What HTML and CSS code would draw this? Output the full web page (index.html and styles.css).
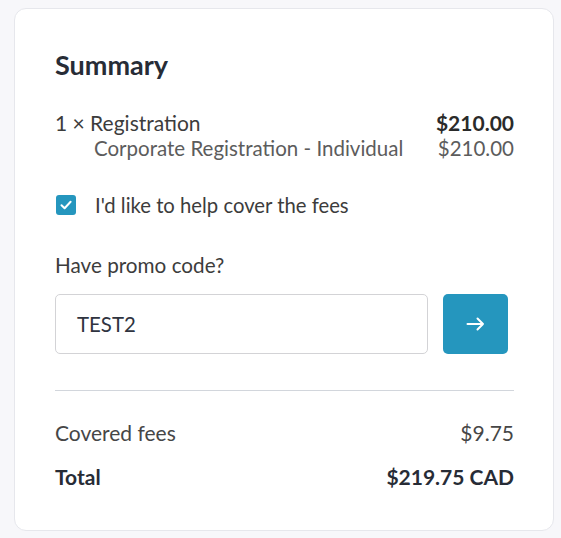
FILE: index.html
```html
<!DOCTYPE html>
<html>
<head>
<meta charset="utf-8">
<link rel="stylesheet" href="styles.css">
</head>
<body>
<div class="card">
  <h2 class="title">Summary</h2>
  <div class="item">
    <div class="row main">
      <span>1 × Registration</span>
      <span class="bold">$210.00</span>
    </div>
    <div class="row sub">
      <span>Corporate Registration - Individual</span>
      <span>$210.00</span>
    </div>
  </div>
  <label class="check">
    <span class="box"><svg width="14" height="14" viewBox="0 0 14 14"><path d="M2.5 7.2 L5.6 10.2 L11.6 3.8" fill="none" stroke="#fff" stroke-width="2" stroke-linecap="round" stroke-linejoin="round"/></svg></span>
    <span>I'd like to help cover the fees</span>
  </label>
  <div class="promo-label">Have promo code?</div>
  <div class="promo">
    <div class="input">TEST2</div>
    <button class="go"><svg width="19" height="14" viewBox="0 0 19 14"><path d="M1.5 7 H17 M11.5 1.5 L17 7 L11.5 12.5" fill="none" stroke="#fff" stroke-width="2" stroke-linecap="round" stroke-linejoin="round"/></svg></button>
  </div>
  <hr class="divider">
  <div class="row fees">
    <span>Covered fees</span>
    <span>$9.75</span>
  </div>
  <div class="row total">
    <span>Total</span>
    <span>$219.75 CAD</span>
  </div>
</div>
</body>
</html>
```
FILE: styles.css
```css
* { box-sizing: border-box; }
html, body { margin: 0; padding: 0; }
body {
  background: #f7f7fa;
  font-family: Lato, "Open Sans", sans-serif;
  color: #3a3a3a;
  padding: 8px 7px 7px 14px;
}
.card {
  width: 540px;
  height: 523px;
  background: #fff;
  border: 1px solid #e6e7ec;
  border-radius: 12px;
  padding: 40px 39px 0 40px;
}
.title {
  margin: 0;
  font-size: 27px;
  font-weight: 700;
  color: #272c36;
  line-height: 32px;
}
.item { margin-top: 29px; }
.row {
  display: flex;
  justify-content: space-between;
  align-items: baseline;
}
.main { font-size: 21px; line-height: 26px; color: #3c3c3c; }
.bold { font-weight: 700; color: #2a2a2a; }
.sub { font-size: 20.5px; line-height: 25px; color: #5c5c5c; padding-left: 39px; }
.check {
  display: flex;
  align-items: center;
  gap: 19px;
  margin-top: 32px;
  padding-left: 1px;
  font-size: 20.3px;
  color: #3c3c3c;
  line-height: 24px;
}
.box {
  width: 20px;
  height: 20px;
  border-radius: 3px;
  background: #2596be;
  display: flex;
  align-items: center;
  justify-content: center;
}
.promo-label {
  margin-top: 36px;
  font-size: 20.7px;
  line-height: 24px;
  color: #3c3c3c;
}
.promo {
  display: flex;
  gap: 15px;
  margin-top: 17px;
  padding-right: 6px;
}
.input {
  flex: 1;
  height: 60px;
  border: 1px solid #d3d3d6;
  border-radius: 5px;
  display: flex;
  align-items: center;
  padding-left: 21px;
  font-size: 20.4px;
  color: #2f3440;
}
.go {
  width: 65px;
  height: 60px;
  border: 0;
  border-radius: 5px;
  background: #2596be;
  display: flex;
  align-items: center;
  justify-content: center;
  padding: 0;
}
.divider {
  margin: 36px 0 0 0;
  border: 0;
  border-top: 1px solid #d2d6dc;
}
.fees {
  margin-top: 30px;
  font-size: 21px;
  line-height: 24px;
  color: #464646;
}
.total {
  margin-top: 20px;
  font-size: 21px;
  line-height: 24px;
  font-weight: 700;
  color: #272c36;
}
```
